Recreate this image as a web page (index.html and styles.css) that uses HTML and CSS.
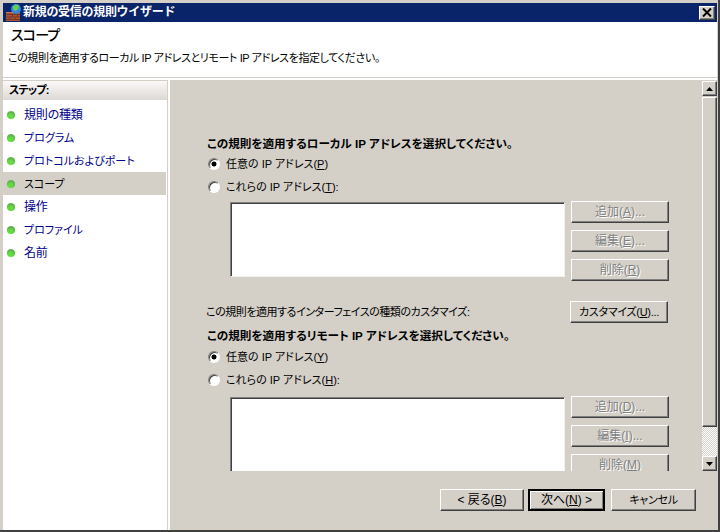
FILE: index.html
```html
<!DOCTYPE html>
<html lang="ja">
<head>
<meta charset="utf-8">
<title>新規の受信の規則ウイザード</title>
<link rel="stylesheet" href="styles.css">
</head>
<body>
<div class="window">
  <div class="titlebar">
    <svg class="app-icon" width="16" height="18" viewBox="0 0 16 18">
      <path d="M0 8h14v9H0z" fill="#a8553c"/>
      <path d="M0 10.500h14M0 13h14M0 15.500h14M4 8v2.500M9 8v2.500M6.500 10.500V13M11.500 10.500V13M4 13v2.500M9 13v2.500" stroke="#7a3522" stroke-width="1" fill="none"/>
      <circle cx="10" cy="5" r="5" fill="#2f86e6"/>
      <path d="M6.500 3L9.500 .5l3.500 1-.5 3.500-3 2-2-1z" fill="#62d24c"/>
      <path d="M0 8.500h7" stroke="#c9775c" stroke-width="1"/>
    </svg>
    <span class="title-text">新規の受信の規則ウイザード</span>
    <span class="close-btn">
      <svg width="10" height="9" viewBox="0 0 10 9"><path d="M1 0.500L9 8.500M9 0.500L1 8.500" stroke="#000" stroke-width="2" fill="none"/></svg>
    </span>
  </div>
  <header class="page-header">
    <h1 class="page-title">スコープ</h1>
    <p class="page-sub">この規則を適用するローカル IP アドレスとリモート IP アドレスを指定してください。</p>
  </header>
  <div class="main">
    <nav class="sidebar">
      <div class="side-head">ステップ:</div>
      <ul class="steps">
        <li class="step kanji"><i class="dot"></i><span class="step-text">規則の種類</span></li>
        <li class="step"><i class="dot"></i><span class="step-text">プログラム</span></li>
        <li class="step"><i class="dot"></i><span class="step-text">プロトコルおよびポート</span></li>
        <li class="step current"><i class="dot"></i><span class="step-text">スコープ</span></li>
        <li class="step kanji"><i class="dot"></i><span class="step-text">操作</span></li>
        <li class="step"><i class="dot"></i><span class="step-text">プロファイル</span></li>
        <li class="step kanji"><i class="dot"></i><span class="step-text">名前</span></li>
      </ul>
    </nav>
    <div class="right">
      <div class="scroll-area">
        <div class="content">
          <h2 class="group-head">この規則を適用するローカル IP アドレスを選択してください。</h2>
          <div class="radio-row"><i class="radio on"></i>任意の IP アドレス(<u>P</u>)</div>
          <div class="radio-row"><i class="radio"></i>これらの IP アドレス(<u>T</u>):</div>
          <div class="list-row">
            <div class="listbox"></div>
            <div class="btn-col">
              <button class="btn kanji" disabled>追加(<u>A</u>)...</button>
              <button class="btn kanji" disabled>編集(<u>E</u>)...</button>
              <button class="btn kanji" disabled>削除(<u>R</u>)</button>
            </div>
          </div>
          <div class="custom-row">
            <span class="custom-label">この規則を適用するインターフェイスの種類のカスタマイズ:</span>
            <button class="btn">カスタマイズ(<u>U</u>)...</button>
          </div>
          <h2 class="group-head second">この規則を適用するリモート IP アドレスを選択してください。</h2>
          <div class="radio-row"><i class="radio on"></i>任意の IP アドレス(<u>Y</u>)</div>
          <div class="radio-row"><i class="radio"></i>これらの IP アドレス(<u>H</u>):</div>
          <div class="list-row lower">
            <div class="listbox"></div>
            <div class="btn-col">
              <button class="btn kanji" disabled>追加(<u>D</u>)...</button>
              <button class="btn kanji" disabled>編集(<u>I</u>)...</button>
              <button class="btn kanji" disabled>削除(<u>M</u>)</button>
            </div>
          </div>
        </div>
        <div class="scrollbar">
          <span class="sb-btn"><svg width="7" height="4" viewBox="0 0 7 4"><path d="M3.500 0L7 4H0z" fill="#000"/></svg></span>
          <span class="sb-thumb"></span>
          <span class="sb-track"></span>
          <span class="sb-btn"><svg width="7" height="4" viewBox="0 0 7 4"><path d="M0 0H7L3.500 4z" fill="#000"/></svg></span>
        </div>
      </div>
      <div class="footer">
        <button class="btn kanji back">&lt; 戻る(<u>B</u>)</button>
        <button class="btn kanji next">次へ(<u>N</u>) &gt;</button>
        <button class="btn cancel">キャンセル</button>
      </div>
    </div>
  </div>
</div>
</body>
</html>
```
FILE: styles.css
```css
* { box-sizing: border-box; }
html, body { margin: 0; padding: 0; }
body {
  width: 720px;
  height: 532px;
  overflow: hidden;
  font-family: "Liberation Sans", "Noto Sans CJK JP", sans-serif;
  font-size: 11px;
  font-feature-settings: "palt";
  color: #000;
}
.window {
  width: 720px;
  height: 532px;
  display: flex;
  flex-direction: column;
  padding: 3px 1px 0 3px;
  background: #d4d0c8;
  border-right: 2px solid #404040;
  border-bottom: 2px solid #404040;
}
.titlebar {
  height: 19px;
  flex: none;
  display: flex;
  align-items: center;
  padding: 0 2px 0 3px;
  background: #0a246a;
  color: #fff;
}
.app-icon { flex: none; margin-right: 1px; }
.title-text {
  flex: 1;
  font-weight: 700;
  font-size: 12px;
  line-height: 19px;
  letter-spacing: -0.3px;
  font-feature-settings: normal;
}
.close-btn {
  width: 16px;
  height: 14px;
  display: flex;
  align-items: center;
  justify-content: center;
  background: #d4d0c8;
  border: 1px solid;
  border-color: #fff #404040 #404040 #fff;
  box-shadow: inset -1px -1px 0 #808080;
}
.page-header {
  height: 58px;
  flex: none;
  background: #fff;
  padding-top: 3px;
}
.page-title {
  margin: 0 0 0 8px;
  font-size: 14px;
  font-weight: 500;
  line-height: 20px;
  letter-spacing: -0.8px;
}
.page-sub {
  margin: 5px 0 0 5px;
  font-size: 11px;
  line-height: 16px;
  letter-spacing: -0.4px;
  white-space: nowrap;
}
.page-header::after {
  content: "";
  display: block;
  height: 1px;
  margin-top: 11px;
  background: #d4d0c8;
}
.main {
  flex: 1;
  display: flex;
  min-height: 0;
  background: #fff;
}
.sidebar {
  width: 165px;
  flex: none;
  margin-right: 2px;
  border-top: 1px solid #d4d0c8;
  border-right: 1px solid #d4d0c8;
}
.side-head {
  height: 19px;
  padding-left: 6px;
  font-weight: 700;
  line-height: 19px;
  letter-spacing: -0.8px;
  background: linear-gradient(#fbf8f8, #dcd9d5);
}
.steps {
  list-style: none;
  margin: 0;
  padding: 3px 0 0;
}
.step {
  height: 23px;
  width: 163px;
  display: flex;
  align-items: center;
  padding-left: 4px;
  color: #00008b;
}
.step-text { padding-top: 1px; line-height: 22px; }
.step.kanji { font-size: 12px; letter-spacing: -0.2px; }
.step.current { background: #d4d0c8; color: #000; }
.dot {
  width: 8px;
  height: 8px;
  flex: none;
  margin-right: 9px;
  border-radius: 50%;
  background: radial-gradient(circle at 45% 70%, #62dc3c 0 30%, #5cb548 60%, #9fb09b 100%);
}
.right {
  flex: 1;
  min-width: 0;
  display: flex;
  flex-direction: column;
  background: #d4d0c8;
}
.scroll-area {
  height: 391px;
  flex: none;
  display: flex;
}
.content {
  flex: 1;
  min-width: 0;
  overflow: hidden;
  padding: 57px 0 0 37px;
  line-height: 16px;
}
.group-head {
  margin: 0 0 1px;
  font-size: 11.600px;
  font-weight: 700;
  line-height: 14px;
  white-space: nowrap;
}
.group-head.second { margin: 6px 0 2px; }
.radio-row {
  height: 23px;
  display: flex;
  align-items: center;
  padding-left: 1px;
  white-space: pre;
}
.radio {
  width: 12px;
  height: 12px;
  flex: none;
  margin-right: 6px;
  border-radius: 50%;
  background: #fff;
  border: 1px solid;
  border-color: #808080 #fff #fff #808080;
  box-shadow: inset 1px 1px 0 #404040;
}
.radio.on { background: radial-gradient(circle, #000 0 2.200px, #fff 2.800px); }
.list-row {
  display: flex;
  gap: 6px;
  margin: 3px 0 0 23px;
}
.list-row.lower { margin-top: 5px; }
.listbox {
  width: 335px;
  height: 75px;
  margin-top: 1px;
  background: #fff;
  border: 1px solid;
  border-color: #808080 #f4f2ee #f4f2ee #808080;
  box-shadow: inset 1px 1px 0 #404040;
}
.btn-col {
  display: flex;
  flex-direction: column;
  gap: 7px;
}
.btn {
  width: 98px;
  height: 22px;
  padding: 0;
  font: inherit;
  font-feature-settings: inherit;
  line-height: 18px;
  letter-spacing: -0.3px;
  color: #000;
  background: #d4d0c8;
  border: 1px solid;
  border-color: #fff #404040 #404040 #fff;
  box-shadow: inset -1px -1px 0 #808080;
}
.btn.kanji { font-size: 12px; letter-spacing: 0; }
.btn:disabled {
  color: #808080;
  text-shadow: 1px 1px 0 #fff;
}
.custom-row {
  display: flex;
  align-items: center;
  justify-content: space-between;
  width: 462px;
  height: 23px;
  margin: 19px 0 0 -1px;
}
.custom-label { letter-spacing: -0.45px; }
.scrollbar {
  width: 15px;
  flex: none;
  margin-top: 1px;
  display: flex;
  flex-direction: column;
}
.sb-btn {
  height: 15px;
  flex: none;
  display: flex;
  align-items: center;
  justify-content: center;
  background: #d4d0c8;
  border: 1px solid;
  border-color: #fff #404040 #404040 #fff;
  box-shadow: inset -1px -1px 0 #808080;
}
.sb-thumb {
  height: 330px;
  flex: none;
  margin-top: 1px;
  background: #d4d0c8;
  border: 1px solid;
  border-color: #fff #404040 #404040 #fff;
  box-shadow: inset -1px -1px 0 #808080;
}
.sb-track {
  flex: 1;
  background: repeating-conic-gradient(#fff 0 25%, #d4d0c8 0 50%) 0 0 / 2px 2px;
}
.footer {
  flex: 1;
  display: flex;
  justify-content: flex-end;
  align-items: flex-start;
  padding: 18px 21px 0 0;
}
.btn.back { width: 84px; margin-right: 4px; }
.btn.next {
  width: 77px;
  margin-right: 6px;
  border: 2px solid #000;
  box-shadow: inset 1px 1px 0 #fff, inset -1px -1px 0 #808080;
}
.btn.cancel { width: 85px; }
```
